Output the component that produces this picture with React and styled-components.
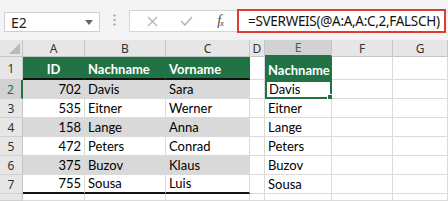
import React from "react";
import styled, { createGlobalStyle } from "styled-components";

const GREEN = "#217346";
const BAND = "#d9d9d9";
const GRID = "#dadada";

const Global = createGlobalStyle`
  html, body {
    margin: 0;
    padding: 0;
    background: #ffffff;
    overflow: hidden;
  }
  body {
    font-family: "Lato", "Liberation Sans", sans-serif;
  }
`;

const Page = styled.div`
  width: 448px;
  height: 201px;
  overflow: hidden;
  display: flex;
  flex-direction: column;
`;

const Toolbar = styled.div`
  height: 40px;
  background: #f3f3f3;
  display: flex;
  align-items: flex-start;
  padding-left: 4px;
  box-sizing: border-box;
`;

const NameBox = styled.div`
  margin-top: 12px;
  width: 96px;
  height: 20px;
  background: #fff;
  border: 1px solid #d0d0d0;
  box-sizing: border-box;
  display: flex;
  align-items: center;
  justify-content: space-between;
  padding: 0 6px 0 6px;
  font-family: "Noto Sans", "Open Sans", sans-serif;
  font-size: 14px;
  color: #222;
`;

const Dots = styled.div`
  width: 29px;
  margin-top: 14px;
  display: flex;
  justify-content: center;
`;

const ButtonsBox = styled.div`
  margin-top: 10px;
  width: 108px;
  height: 22px;
  background: #fff;
  border: 1px solid #d6d6d6;
  border-right: none;
  box-sizing: border-box;
  display: flex;
  align-items: center;
  justify-content: space-around;
  padding-left: 6px;
`;

const IconSlot = styled.span`
  width: 24px;
  display: flex;
  justify-content: center;
  align-items: center;
`;

const Fx = styled.span`
  font-family: "Liberation Serif", serif;
  font-style: italic;
  font-size: 14px;
  color: #444;
  letter-spacing: -1px;
  sub {
    font-size: 9px;
    vertical-align: -1px;
  }
`;

const FormulaInput = styled.div`
  margin-top: 9px;
  width: 209px;
  height: 24px;
  border: 2px solid #e03b30;
  background: #fff;
  box-sizing: border-box;
  display: flex;
  align-items: center;
  padding-left: 9px;
  font-family: "Noto Sans", "Open Sans", sans-serif;
  font-size: 13.5px;
  letter-spacing: -0.3px;
  color: #111;
  white-space: nowrap;
`;

const Sheet = styled.div`
  display: grid;
  grid-template-columns: 23px 62px 81px 84px 15px 67px 61px 1fr;
  grid-template-rows: 17px 23px repeat(6, 19px) 7px;
  font-size: 13px;
`;

const Corner = styled.div`
  background: #e6e6e6;
  border-right: 1px solid #c6c6c6;
  border-bottom: 1px solid #c6c6c6;
  display: flex;
  align-items: flex-end;
  justify-content: flex-end;
  padding: 0 2px 2px 0;
`;

const ColHead = styled.div`
  background: ${(p) => (p.$active ? "#d2d2d2" : "#e6e6e6")};
  color: ${(p) => (p.$active ? GREEN : "#333")};
  border-right: 1px solid #c6c6c6;
  border-bottom: ${(p) => (p.$active ? `2px solid ${GREEN}` : "1px solid #c6c6c6")};
  display: flex;
  align-items: center;
  justify-content: center;
  font-family: "Noto Sans", "Open Sans", sans-serif;
  font-size: 12px;
  box-sizing: border-box;
`;

const RowHead = styled.div`
  background: ${(p) => (p.$active ? "#d2d2d2" : "#e6e6e6")};
  color: ${(p) => (p.$active ? GREEN : "#333")};
  border-right: ${(p) => (p.$active ? `2px solid ${GREEN}` : "1px solid #c6c6c6")};
  border-bottom: 1px solid #cfcfcf;
  display: flex;
  align-items: center;
  justify-content: center;
  font-family: "Noto Sans", "Open Sans", sans-serif;
  font-size: 12px;
  box-sizing: border-box;
`;

const Cell = styled.div`
  position: relative;
  box-sizing: border-box;
  background: ${(p) => p.$bg || "#fff"};
  color: ${(p) => (p.$head ? "#fff" : "#000")};
  font-weight: ${(p) => (p.$head ? 700 : 400)};
  border-right: 1px solid ${(p) => (p.$bg ? p.$bg : GRID)};
  border-bottom: ${(p) => (p.$rule ? "2px solid #111" : `1px solid ${p.$bg ? p.$bg : GRID}`)};
  display: flex;
  align-items: flex-end;
  justify-content: ${(p) => (p.$align === "right" ? "flex-end" : p.$align === "center" ? "center" : "flex-start")};
  padding: 0 3px 1px 3px;
  white-space: nowrap;
  overflow: hidden;
  ${(p) => p.$selected && `border: 2px solid ${GREEN}; padding: 0 2px 0 2px; overflow: visible;`}
`;

const Handle = styled.span`
  position: absolute;
  right: -4px;
  bottom: -4px;
  width: 5px;
  height: 5px;
  background: ${GREEN};
  border: 1px solid #fff;
`;

const rows = [
  [702, "Davis", "Sara"],
  [535, "Eitner", "Werner"],
  [158, "Lange", "Anna"],
  [472, "Peters", "Conrad"],
  [375, "Buzov", "Klaus"],
  [755, "Sousa", "Luis"],
];

const cols = ["A", "B", "C", "D", "E", "F", "G"];

export default function App() {
  return (
    <Page>
      <Global />
      <Toolbar>
        <NameBox>
          E2
          <svg width="8" height="5" viewBox="0 0 8 5">
            <polygon points="0,0 8,0 4,5" fill="#666" />
          </svg>
        </NameBox>
        <Dots>
          <svg width="3" height="12" viewBox="0 0 3 12">
            <circle cx="1.5" cy="1.5" r="1.1" fill="#9a9a9a" />
            <circle cx="1.5" cy="6" r="1.1" fill="#9a9a9a" />
            <circle cx="1.5" cy="10.5" r="1.1" fill="#9a9a9a" />
          </svg>
        </Dots>
        <ButtonsBox>
          <IconSlot>
            <svg width="11" height="11" viewBox="0 0 11 11">
              <path d="M1 1 L10 10 M10 1 L1 10" stroke="#b5b5b5" strokeWidth="1.4" />
            </svg>
          </IconSlot>
          <IconSlot>
            <svg width="13" height="10" viewBox="0 0 13 10">
              <path d="M1 5 L5 9 L12 1" stroke="#b5b5b5" strokeWidth="1.6" fill="none" />
            </svg>
          </IconSlot>
          <IconSlot>
            <Fx>
              f<sub>x</sub>
            </Fx>
          </IconSlot>
        </ButtonsBox>
        <FormulaInput>=SVERWEIS(@A:A,A:C,2,FALSCH)</FormulaInput>
      </Toolbar>

      <Sheet>
        <Corner>
          <svg width="11" height="11" viewBox="0 0 11 11">
            <polygon points="11,0 11,11 0,11" fill="#b9b9b9" />
          </svg>
        </Corner>
        {cols.map((c) => (
          <ColHead key={c} $active={c === "E"}>
            {c}
          </ColHead>
        ))}

        <RowHead>1</RowHead>
        <Cell $bg={GREEN} $head $align="center" $rule>
          ID
        </Cell>
        <Cell $bg={GREEN} $head $rule>
          Nachname
        </Cell>
        <Cell $bg={GREEN} $head $rule>
          Vorname
        </Cell>
        <Cell />
        <Cell $bg={GREEN} $head>
          Nachname
        </Cell>
        <Cell />
        <Cell />

        {rows.map(([id, last, first], i) => {
          const band = i % 2 === 0 ? BAND : undefined;
          const isLast = i === rows.length - 1;
          return (
            <React.Fragment key={id}>
              <RowHead $active={i === 0}>{i + 2}</RowHead>
              <Cell $bg={band} $align="right" $rule={isLast}>
                {id}
              </Cell>
              <Cell $bg={band} $rule={isLast}>
                {last}
              </Cell>
              <Cell $bg={band} $rule={isLast}>
                {first}
              </Cell>
              <Cell />
              <Cell $selected={i === 0}>
                {last}
                {i === 0 && <Handle />}
              </Cell>
              <Cell />
              <Cell />
            </React.Fragment>
          );
        })}

        <RowHead />
        {cols.map((c) => (
          <Cell key={c} />
        ))}
      </Sheet>
    </Page>
  );
}
